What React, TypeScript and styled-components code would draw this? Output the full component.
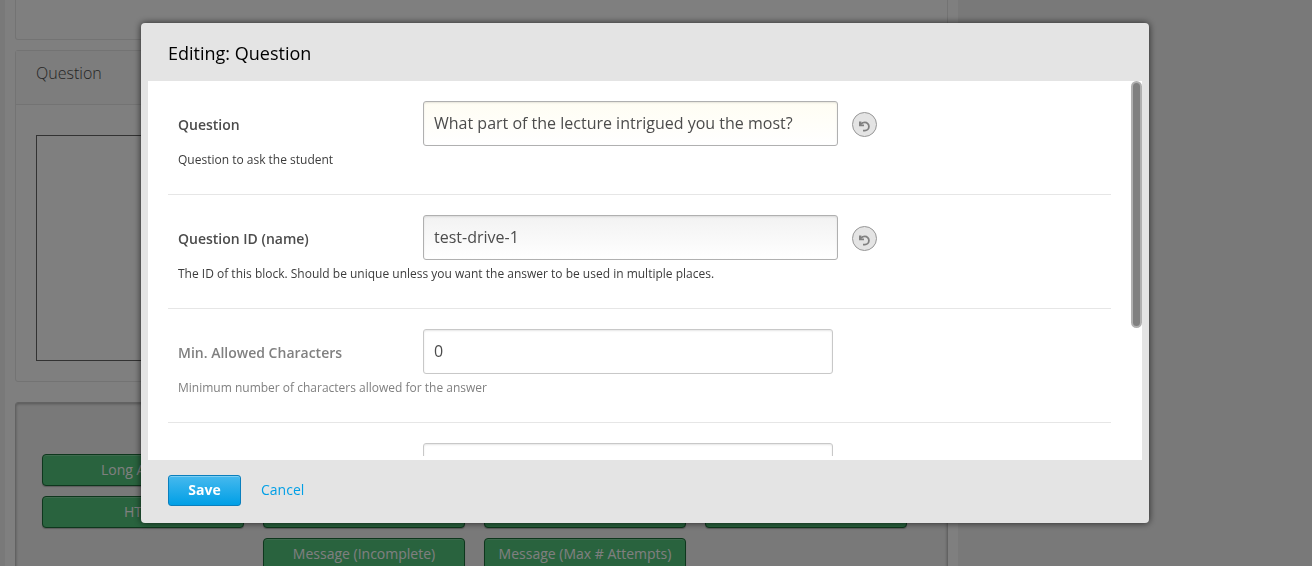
import React, { useState } from "react";
import styled, { createGlobalStyle, css } from "styled-components";

const GlobalStyle = createGlobalStyle`
  *, *::before, *::after { box-sizing: border-box; }
  html, body, #root { height: 100%; }
  body {
    margin: 0;
    overflow: hidden;
    background: #f2f2f2;
    color: #4c4c4c;
    font-family: "Open Sans", "Noto Sans", sans-serif;
    font-size: 16px;
  }
  button, input, textarea { font: inherit; }
`;

const Page = styled.div`
  height: 100%;
  padding: 0 354px 0 5px;
  overflow: hidden;
`;

const UnitColumn = styled.main`
  display: flex;
  flex-direction: column;
  min-height: 100%;
  padding: 0 10px;
  background: #fefefe;
`;

const Block = styled.section`
  flex: none;
  margin-bottom: 10px;
  border: 1px solid #e6e6e6;
  border-radius: 3px;
`;

const PreviousBlock = styled(Block)`
  height: 40px;
  border-top: 0;
  border-radius: 0 0 3px 3px;
`;

const BlockHeader = styled.header`
  height: 54px;
  padding: 10px 20px;
  border-bottom: 1px solid #e6e6e6;
  background: #fafafa;
  line-height: 24px;
`;

const BlockTitle = styled.h2`
  margin: 0;
  font-size: 16px;
  font-weight: 300;
  line-height: 24px;
`;

const BlockBody = styled.div`
  display: flex;
  padding: 30px 20px 20px;
`;

const AnswerArea = styled.textarea`
  flex: 1;
  height: 226px;
  border: 1px solid #646464;
  background: #fefefe;
  resize: none;
`;

const AddPanel = styled.section`
  display: flex;
  flex: none;
  flex-wrap: wrap;
  justify-content: center;
  gap: 10px 19px;
  margin-top: 10px;
  padding: 51px 32px 20px 18px;
  border: 1px solid #c4c4c4;
  border-radius: 3px;
  background: #f3f3f3;
  box-shadow: inset 0 1px 3px rgba(0, 0, 0, 0.3);
`;

const AddButton = styled.button`
  width: 202px;
  height: 32px;
  padding: 0 0 2px;
  border: 1px solid #1d6e3a;
  border-radius: 4px;
  background: #52c67c;
  box-shadow: inset 0 1px 0 rgba(255, 255, 255, 0.25), 0 1px 1px rgba(0, 0, 0, 0.25);
  color: #fff;
  font-size: 14px;
  font-weight: 400;
`;

const Overlay = styled.div`
  position: fixed;
  inset: 0;
  display: flex;
  align-items: flex-start;
  justify-content: center;
  padding: 23px 22px 0 0;
  background: rgba(0, 0, 0, 0.5);
`;

const Dialog = styled.form`
  flex: 0 1 1008px;
  min-width: 0;
  padding: 0 7px;
  border-radius: 4px;
  background: #e4e4e4;
  box-shadow: 0 0 7px rgba(0, 0, 0, 0.7);
`;

const DialogHeader = styled.header`
  padding: 18px 20px 16px;
`;

const DialogTitle = styled.h1`
  margin: 0;
  color: #000;
  font-size: 18px;
  font-weight: 400;
  line-height: 24px;
`;

const DialogContent = styled.div`
  position: relative;
  padding-bottom: 4px;
  background: #fff;
`;

const SettingsList = styled.ul`
  height: 375px;
  margin: 0;
  padding: 0 31px 0 20px;
  overflow: hidden;
  list-style: none;
`;

const ScrollThumb = styled.div`
  position: absolute;
  top: 0;
  right: 0;
  width: 11px;
  height: 247px;
  border: 2px solid #b0b0b0;
  border-radius: 6px;
  background: #808080;
`;

const SettingItem = styled.li<{ $isSet: boolean }>`
  padding: 20px 10px 25px;
  border-bottom: 1px solid #e6e6e6;
  color: ${(p) => (p.$isSet ? "#4c4c4c" : "#808080")};
`;

const SettingRow = styled.div`
  display: flex;
  align-items: center;
`;

const SettingLabel = styled.label`
  flex: 0 0 245px;
  padding-top: 2px;
  font-size: 14px;
  font-weight: 600;
  line-height: 24px;
`;

const tints = {
  yellow: "#fffdf3",
  grey: "#f2f2f2",
  none: "#ffffff",
};

const SettingInput = styled.input<{ $tint: keyof typeof tints }>`
  flex: 0 1 ${(p) => (p.$tint === "none" ? 410 : 415)}px;
  min-width: 0;
  height: 45px;
  padding: 0 10px 2px;
  border: 1px solid ${(p) => (p.$tint === "none" ? "#c8c8c8" : "#b0b0b0")};
  border-radius: 3px;
  outline: none;
  background: linear-gradient(${(p) => tints[p.$tint]}, #fff);
  box-shadow: inset 0 1px 2px rgba(0, 0, 0, 0.1);
  color: #4c4c4c;
  font-size: 16px;
`;

const ResetButton = styled.button`
  display: flex;
  flex: none;
  align-items: center;
  justify-content: center;
  width: 25px;
  height: 25px;
  margin: 2px 0 0 14px;
  padding: 3px 0 0;
  border: 1px solid #979797;
  border-radius: 50%;
  background: #e4e4e4;
  color: #808080;
`;

const HelpText = styled.p<{ $isSet: boolean }>`
  margin: 5px 0 0;
  color: ${(p) => (p.$isSet ? "#3c3c3c" : "#808080")};
  font-size: 12px;
  line-height: 18px;
`;

const DialogActions = styled.footer`
  display: flex;
  align-items: center;
  gap: 20px;
  padding: 15px 20px 17px;
`;

const actionText = css`
  padding: 0 0 2px;
  font-size: 14px;
  line-height: 20px;
`;

const SaveButton = styled.button`
  ${actionText}
  width: 73px;
  height: 31px;
  border: 1px solid #0a7fbd;
  border-radius: 3px;
  background: linear-gradient(#46b9ee, #009fe6);
  box-shadow: inset 0 1px 0 rgba(255, 255, 255, 0.3);
  color: #fff;
  font-weight: 700;
`;

const CancelLink = styled.a`
  ${actionText}
  color: #009fe6;
  text-decoration: none;
`;

const UndoIcon = () => (
  <svg width="13" height="13" viewBox="0 0 13 13" fill="none" aria-hidden="true">
    <path d="M3 4.2C4 3 5.3 2.4 6.8 2.4A4.1 4.1 0 0 1 6.8 10.6H5" stroke="currentColor" strokeWidth="1.8" />
    <path d="M1 1.4V6.2H6V4.6H3.4V1.4Z" fill="currentColor" />
  </svg>
);

type Setting = {
  id: string;
  label: string;
  help: string;
  value: string;
  tint: keyof typeof tints;
};

const initialSettings: Setting[] = [
  {
    id: "question",
    label: "Question",
    help: "Question to ask the student",
    value: "What part of the lecture intrigued you the most?",
    tint: "yellow",
  },
  {
    id: "name",
    label: "Question ID (name)",
    help: "The ID of this block. Should be unique unless you want the answer to be used in multiple places.",
    value: "test-drive-1",
    tint: "grey",
  },
  {
    id: "min-characters",
    label: "Min. Allowed Characters",
    help: "Minimum number of characters allowed for the answer",
    value: "0",
    tint: "none",
  },
  { id: "next", label: "", help: "", value: "", tint: "none" },
];

const components: { name: string; text?: string }[] = [
  { name: "Long Answer", text: "Long Answer" },
  { name: "Multiple choice" },
  { name: "Rating" },
  { name: "Multiple response" },
  { name: "HTML", text: "HTML" },
  { name: "Answer recap" },
  { name: "Table" },
  { name: "Message" },
  { name: "Message (Incomplete)", text: "Message (Incomplete)" },
  { name: "Message (Max # Attempts)", text: "Message (Max # Attempts)" },
];

export default function App() {
  const [values, setValues] = useState<Record<string, string>>(
    Object.fromEntries(initialSettings.map((s) => [s.id, s.value]))
  );

  const update = (id: string, value: string) => setValues((v) => ({ ...v, [id]: value }));

  return (
    <>
      <GlobalStyle />
      <Page>
        <UnitColumn>
          <PreviousBlock />
          <Block>
            <BlockHeader>
              <BlockTitle>Question</BlockTitle>
            </BlockHeader>
            <BlockBody>
              <AnswerArea aria-label="Answer" />
            </BlockBody>
          </Block>
          <AddPanel>
            {components.map((c) => (
              <AddButton key={c.name} type="button" aria-label={c.name}>
                {c.text}
              </AddButton>
            ))}
          </AddPanel>
        </UnitColumn>
      </Page>
      <Overlay>
        <Dialog role="dialog" aria-labelledby="dialog-title" onSubmit={(e) => e.preventDefault()}>
          <DialogHeader>
            <DialogTitle id="dialog-title">Editing: Question</DialogTitle>
          </DialogHeader>
          <DialogContent>
            <SettingsList>
              {initialSettings.map((s) => {
                const isSet = s.tint !== "none";
                return (
                  <SettingItem key={s.id} $isSet={isSet}>
                    <SettingRow>
                      <SettingLabel htmlFor={s.id}>{s.label}</SettingLabel>
                      <SettingInput
                        id={s.id}
                        $tint={s.tint}
                        value={values[s.id]}
                        onChange={(e) => update(s.id, e.target.value)}
                      />
                      {isSet && (
                        <ResetButton type="button" aria-label="Clear" onClick={() => update(s.id, "")}>
                          <UndoIcon />
                        </ResetButton>
                      )}
                    </SettingRow>
                    <HelpText $isSet={isSet}>{s.help}</HelpText>
                  </SettingItem>
                );
              })}
            </SettingsList>
            <ScrollThumb />
          </DialogContent>
          <DialogActions>
            <SaveButton type="submit">Save</SaveButton>
            <CancelLink href="#">Cancel</CancelLink>
          </DialogActions>
        </Dialog>
      </Overlay>
    </>
  );
}
